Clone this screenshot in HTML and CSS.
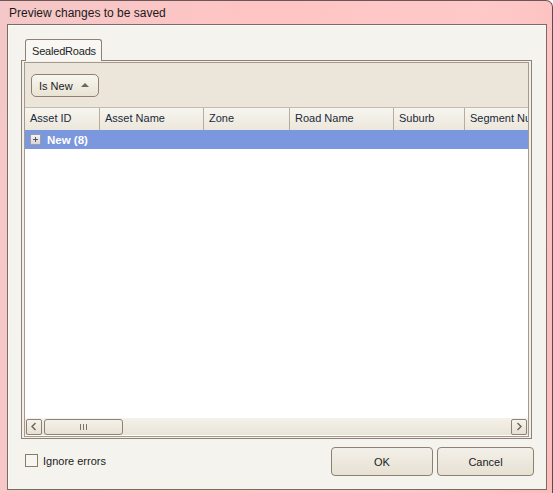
FILE: index.html
```html
<!DOCTYPE html>
<html>
<head>
<meta charset="utf-8">
<link rel="stylesheet" href="styles.css">
</head>
<body>
<div class="window">
  <div class="titlebar">Preview changes to be saved</div>
  <div class="panel">
    <div class="tabs">
      <div class="tab">SealedRoads</div>
    </div>
    <div class="tabpage">
      <div class="inner">
        <div class="toolbar">
          <div class="combo"><span>Is New</span><span class="arrow"></span></div>
        </div>
        <div class="grid">
          <div class="header">
            <div class="hcell c1">Asset ID</div>
            <div class="hcell c2">Asset Name</div>
            <div class="hcell c3">Zone</div>
            <div class="hcell c4">Road Name</div>
            <div class="hcell c5">Suburb</div>
            <div class="hcell c6">Segment Number</div>
          </div>
          <div class="grouprow">
            <span class="plus"></span><span class="gtext">New (8)</span>
          </div>
          <div class="body"></div>
          <div class="hscroll">
            <div class="sbtn">
              <svg width="8" height="9" viewBox="0 0 8 9"><path d="M5.5 1 L2 4.5 L5.5 8" fill="none" stroke="#6e6259" stroke-width="1.4"/></svg>
            </div>
            <div class="thumb"><span class="grip"></span><span class="grip"></span><span class="grip"></span></div>
            <div class="track"></div>
            <div class="sbtn">
              <svg width="8" height="9" viewBox="0 0 8 9"><path d="M2.5 1 L6 4.5 L2.5 8" fill="none" stroke="#6e6259" stroke-width="1.4"/></svg>
            </div>
          </div>
        </div>
      </div>
    </div>
    <div class="footer">
      <label class="check"><span class="box"></span><span>Ignore errors</span></label>
      <div class="buttons">
        <div class="btn ok">OK</div>
        <div class="btn cancel">Cancel</div>
      </div>
    </div>
  </div>
</div>
</body>
</html>
```
FILE: styles.css
```css
html, body {
  margin: 0;
  padding: 0;
}
body {
  width: 553px;
  height: 493px;
  overflow: hidden;
  font-family: "Liberation Sans", Arial, sans-serif;
  font-size: 11px;
  color: #1b1b1b;
}
.window {
  box-sizing: border-box;
  width: 553px;
  height: 500px;
  background: linear-gradient(100deg, #f4c8c8 0%, #ffc4c4 40%, #ffc9c9 75%, #fbbcbc 100%);
  border-right: 1px solid #5d4b4b;
  border-top: 1px solid #6b5757;
  border-top-right-radius: 7px;
  padding: 0 5px 0 7px;
  display: flex;
  flex-direction: column;
}
.titlebar {
  height: 23px;
  line-height: 25px;
  padding-left: 2px;
  font-size: 12px;
  color: #1a1a1a;
}
.panel {
  box-sizing: border-box;
  width: 540px;
  height: 466px;
  border: 1px solid #7a6c64;
  background: #f4f3ee;
  box-shadow: inset 1px 1px 0 #fbfaf7;
  padding: 14px 13px 0 13px;
  display: flex;
  flex-direction: column;
}
.tabs {
  display: flex;
  padding-left: 4px;
  height: 21px;
}
.tab {
  box-sizing: border-box;
  height: 22px;
  padding: 5px 5px 0 6px;
  border: 1px solid #8c8078;
  border-bottom: none;
  border-radius: 3px 3px 0 0;
  background: #f8f7f3;
  position: relative;
  z-index: 1;
  color: #1e1e1e;
  letter-spacing: -0.2px;
}
.tabpage {
  box-sizing: border-box;
  width: 511px;
  height: 379px;
  border: 1px solid #8d8178;
  padding: 1px 2px 1px 2px;
  background: #f2f0ea;
}
.inner {
  box-sizing: border-box;
  height: 100%;
  border: 1px solid #a79a8c;
  display: flex;
  flex-direction: column;
}
.toolbar {
  height: 44px;
  background: #ebe6d9;
  padding: 11px 0 0 6px;
  box-sizing: border-box;
}
.combo {
  box-sizing: border-box;
  width: 68px;
  height: 23px;
  border: 1px solid #8e8072;
  border-radius: 5px;
  background: linear-gradient(#f8f6f0, #e9e3d5);
  display: flex;
  align-items: center;
  justify-content: space-between;
  padding: 0 9px 0 7px;
  color: #1b1b1b;
}
.arrow {
  width: 0;
  height: 0;
  border-left: 4px solid transparent;
  border-right: 4px solid transparent;
  border-bottom: 4px solid #6f655d;
  margin-bottom: 1px;
}
.grid {
  flex: 1;
  display: flex;
  flex-direction: column;
  background: #fff;
}
.header {
  display: flex;
  height: 22px;
  background: linear-gradient(#f7f5f0, #ece7dc);
  border-top: 1px solid #c6bcae;
  overflow: hidden;
}
.hcell {
  box-sizing: border-box;
  flex: none;
  height: 22px;
  line-height: 21px;
  padding-left: 5px;
  border-right: 1px solid #b8ab9c;
  white-space: nowrap;
  overflow: hidden;
  color: #1b2a3a;
}
.c1 { width: 75px; }
.c2 { width: 104px; }
.c3 { width: 86px; }
.c4 { width: 104px; }
.c5 { width: 71px; }
.c6 { width: 63px; border-right: none; }
.grouprow {
  height: 19px;
  background: #7b97dd;
  display: flex;
  align-items: center;
  padding-left: 5px;
}
.plus {
  box-sizing: border-box;
  width: 11px;
  height: 11px;
  border: 1px solid #9c9da6;
  background: linear-gradient(#f3f3f3, #d7d7da);
  position: relative;
  margin-right: 6px;
}
.plus::before, .plus::after {
  content: "";
  position: absolute;
  background: #555;
}
.plus::before { left: 2px; top: 4px; width: 5px; height: 1px; }
.plus::after { left: 4px; top: 2px; width: 1px; height: 5px; }
.gtext {
  font-weight: bold;
  color: #fff;
  font-size: 11.5px;
}
.body {
  flex: 1;
  background: #fff;
}
.hscroll {
  height: 17px;
  display: flex;
  align-items: center;
  background: linear-gradient(#f4f1ea, #e9e4d7);
  padding: 0 1px;
  margin-bottom: 1px;
}
.sbtn {
  box-sizing: border-box;
  width: 16px;
  height: 16px;
  border: 1px solid #8e8072;
  border-radius: 2px;
  background: linear-gradient(#f6f3ec, #e7e1d3);
  display: flex;
  align-items: center;
  justify-content: center;
}
.thumb {
  box-sizing: border-box;
  width: 79px;
  height: 16px;
  margin-left: 2px;
  border: 1px solid #8e8072;
  border-radius: 3px;
  background: linear-gradient(#f5f2eb, #e8e2d4);
  display: flex;
  align-items: center;
  justify-content: center;
  gap: 2px;
}
.grip {
  width: 1px;
  height: 6px;
  background: #7d7168;
}
.track {
  flex: 1;
}
.footer {
  display: flex;
  justify-content: space-between;
  align-items: flex-start;
  padding-top: 8px;
}
.check {
  display: flex;
  align-items: center;
  gap: 5px;
  margin-top: 7px;
  margin-left: 4px;
  color: #1b1b1b;
}
.box {
  box-sizing: border-box;
  width: 13px;
  height: 13px;
  border: 1px solid #8a7a6c;
  background: #f7f5f0;
}
.buttons {
  display: flex;
  gap: 4px;
  margin-right: -1px;
}
.btn {
  box-sizing: border-box;
  height: 29px;
  border: 1px solid #8e8072;
  border-radius: 4px;
  background: linear-gradient(#f3f0e9, #e7e1d3);
  display: flex;
  align-items: center;
  justify-content: center;
  color: #1b1b1b;
}
.ok { width: 102px; }
.cancel { width: 97px; }
```
